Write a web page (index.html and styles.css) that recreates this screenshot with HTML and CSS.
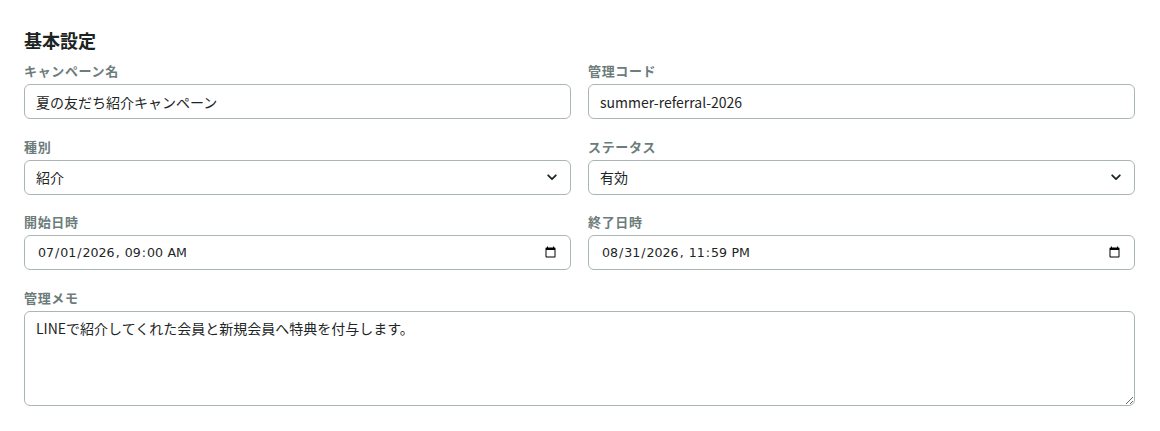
FILE: index.html
```html
<!DOCTYPE html>
<html lang="ja">
<head>
<meta charset="utf-8">
<title>基本設定</title>
<link rel="stylesheet" href="styles.css">
</head>
<body>
<section class="card">
  <h2 class="title">基本設定</h2>
  <div class="grid">
    <div class="field">
      <label class="label">キャンペーン名</label>
      <input class="control" type="text" value="夏の友だち紹介キャンペーン">
    </div>
    <div class="field">
      <label class="label">管理コード</label>
      <input class="control" type="text" value="summer-referral-2026">
    </div>
    <div class="field">
      <label class="label">種別</label>
      <div class="select-wrap">
        <select class="control select">
          <option selected>紹介</option>
          <option>通常</option>
        </select>
        <svg class="chevron" width="10" height="7" viewBox="0 0 10 7" aria-hidden="true"><path d="M1.2 1.3 L5 5.1 L8.8 1.3" fill="none" stroke="#1d2626" stroke-width="1.8" stroke-linecap="round" stroke-linejoin="round"/></svg>
      </div>
    </div>
    <div class="field">
      <label class="label">ステータス</label>
      <div class="select-wrap">
        <select class="control select">
          <option selected>有効</option>
          <option>無効</option>
        </select>
        <svg class="chevron" width="10" height="7" viewBox="0 0 10 7" aria-hidden="true"><path d="M1.2 1.3 L5 5.1 L8.8 1.3" fill="none" stroke="#1d2626" stroke-width="1.8" stroke-linecap="round" stroke-linejoin="round"/></svg>
      </div>
    </div>
    <div class="field">
      <label class="label">開始日時</label>
      <input class="control date" type="datetime-local" value="2026-07-01T09:00">
    </div>
    <div class="field">
      <label class="label">終了日時</label>
      <input class="control date" type="datetime-local" value="2026-08-31T23:59">
    </div>
    <div class="field wide">
      <label class="label">管理メモ</label>
      <textarea class="control memo">LINEで紹介してくれた会員と新規会員へ特典を付与します。</textarea>
    </div>
  </div>
</section>
</body>
</html>
```
FILE: styles.css
```css
html, body {
  margin: 0;
  background: #ffffff;
}
body {
  font-family: "Noto Sans CJK JP", "Noto Sans", sans-serif;
  color: #1d2626;
}
.card {
  padding: 27px 25px 0 24px;
}
.title {
  margin: 0 0 8px;
  font-size: 18px;
  line-height: 26px;
  font-weight: 700;
  color: #1b2323;
}
.grid {
  display: grid;
  grid-template-columns: 1fr 1fr;
  column-gap: 17px;
  row-gap: 17.5px;
}
.field {
  display: flex;
  flex-direction: column;
}
.wide {
  grid-column: 1 / -1;
}
.label {
  font-size: 13px;
  line-height: 19px;
  font-weight: 700;
  letter-spacing: 0.05em;
  color: #6c7c7b;
  margin-bottom: 4px;
}
.control {
  box-sizing: border-box;
  width: 100%;
  height: 35px;
  margin: 0;
  padding: 0 11px;
  border: 1px solid #aab6b5;
  border-radius: 6px;
  background: #ffffff;
  font-family: "Noto Sans CJK JP", "Noto Sans", sans-serif;
  font-size: 14px;
  color: #1d2626;
  outline: none;
}
.select-wrap {
  position: relative;
}
.select {
  appearance: none;
  -webkit-appearance: none;
  padding-right: 32px;
}
.chevron {
  position: absolute;
  right: 14px;
  top: 14px;
  pointer-events: none;
}
.date {
  font-family: "DejaVu Sans", sans-serif;
  font-size: 12.6px;
  padding-left: 12px;
}
.memo {
  height: 95px;
  padding: 6px 11px;
  line-height: 21px;
  resize: vertical;
}
```
